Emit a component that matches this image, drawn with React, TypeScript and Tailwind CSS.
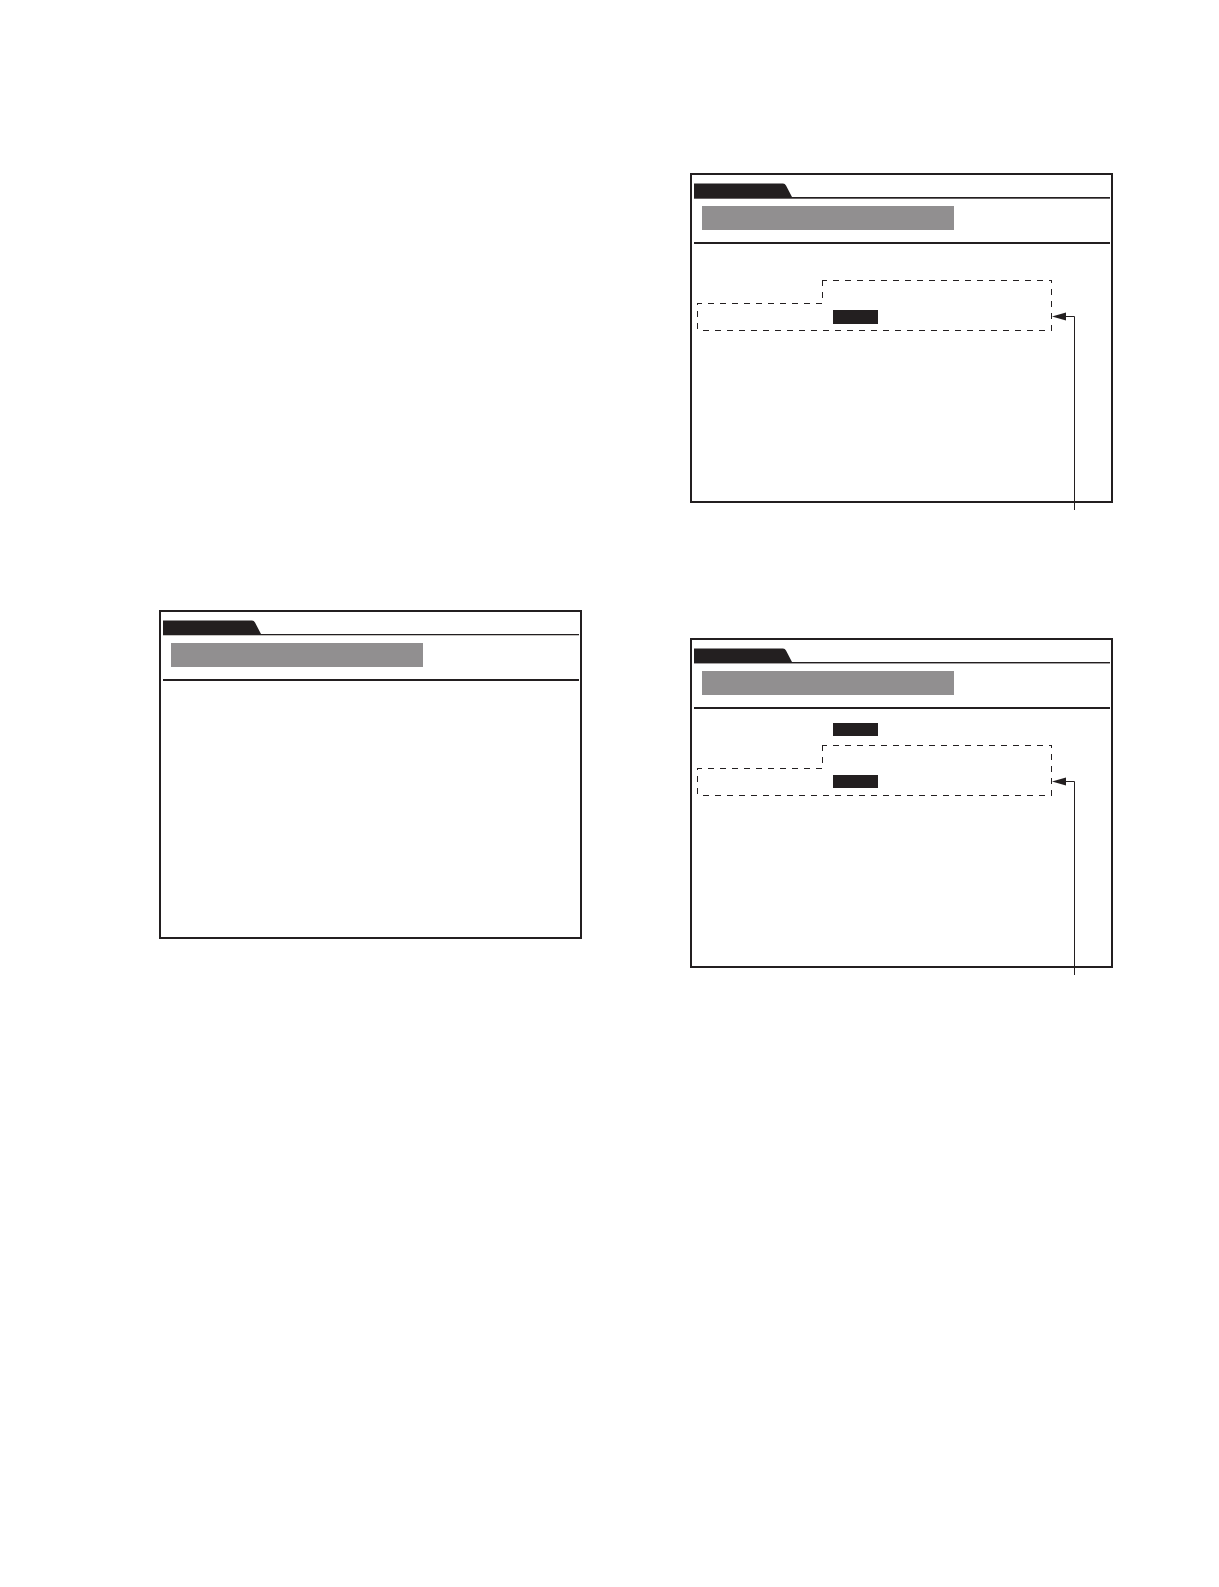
import React from 'react';
import clsx from 'clsx';

interface ScreenPanelProps {
  heightClass?: string;
  ruleClass: string;
  // one entry per row, null leaves the row blank
  chips?: (string | null)[];
  callout?: boolean;
}

const Tab: React.FC = () => (
  <svg className="block h-[14px] w-[98px]" viewBox="0 0 98 14" aria-hidden="true">
    <path d="M0 0.5H89Q91 0.5 92 2.5L98 14H0Z" fill="#231f20" />
  </svg>
);

// Dashed outline around the highlighted rows with the leader line below
const Callout: React.FC = () => (
  <svg
    className="pointer-events-none absolute top-0 left-0 h-[337px] w-[423px]"
    viewBox="0 0 423 337"
    fill="none"
    stroke="#231f20"
    aria-hidden="true"
  >
    <g strokeDasharray="6 6">
      <path d="M132 107.5H362" strokeDashoffset="1" />
      <path d="M361.5 107V158" strokeDashoffset="3" />
      <path d="M7 157.5H361" strokeDashoffset="6" />
      <path d="M7.5 130V158" strokeDashoffset="4" />
      <path d="M7 130.5H132" strokeDashoffset="1" />
      <path d="M132.5 107V131" />
    </g>
    <path d="M376 143.5H384.5V337" />
    <path d="M362 143.5L376 139.5V147.5Z" fill="#231f20" stroke="none" />
  </svg>
);

const ScreenPanel: React.FC<ScreenPanelProps> = ({
  heightClass = 'h-[330px]',
  ruleClass,
  chips = [],
  callout = false,
}) => {
  return (
    <section className="relative">
      <div className={clsx('border-2 border-[#231f20] pt-2 pr-px pl-0.5', heightClass)}>
        <header>
          <Tab />
          <div className={clsx('h-0.5 border-t border-t-[#231f20]', ruleClass)} />
          <div className="mt-[7px] ml-2 h-6 w-[252px] bg-[#918f90]" />
          <div className="mt-3 h-0.5 bg-[#231f20]" />
        </header>
        <div className="flex flex-col gap-[39px] pt-[14px] pl-[139px]">
          {chips.map((chip, i) => (
            <div key={i} className="h-[13px] w-[45px]">
              {chip && <div className={clsx('bg-[#231f20]', chip)} />}
            </div>
          ))}
        </div>
      </div>
      {callout && <Callout />}
    </section>
  );
};

export default function App() {
  return (
    <main className="grid min-h-screen grid-cols-2 items-start gap-x-[108px] bg-white pr-[106px] pl-[159px]">
      <div className="pt-[610px]">
        <ScreenPanel heightClass="h-[329px]" ruleClass="bg-[#c4c2c0]" />
      </div>
      <div className="flex flex-col gap-[135px] pt-[173px]">
        <ScreenPanel ruleClass="bg-[#686466]" chips={[null, 'h-[14px]']} callout />
        <ScreenPanel ruleClass="bg-[#a3a0a1]" chips={['h-[13px]', 'h-[13px]']} callout />
      </div>
    </main>
  );
}
